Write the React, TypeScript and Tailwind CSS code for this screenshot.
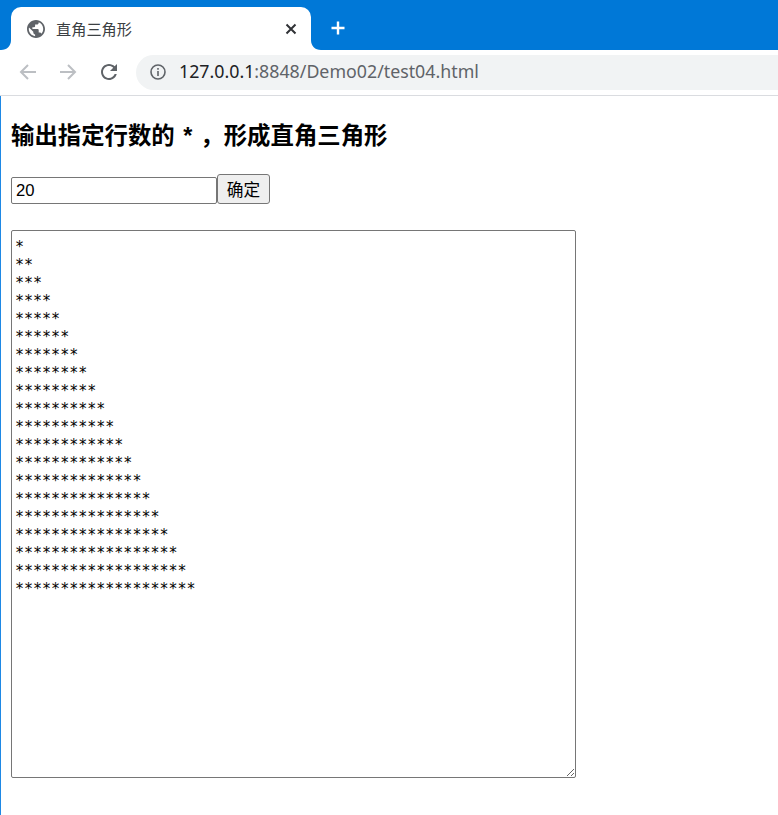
import React from 'react';

const rows = Array.from({ length: 20 }, (_, i) => '*'.repeat(i + 1)).join('\n');

const BrowserTab = () => (
  <div className="relative ml-[11px] flex h-[43px] w-[300px] items-center rounded-t-[10px] bg-white pl-[16px] pr-[14px]">
    {/* flares at the foot of the tab */}
    <svg className="absolute bottom-0 left-[-10px]" width="10" height="10" viewBox="0 0 10 10">
      <path d="M10 0V10H0C6 10 10 6 10 0Z" fill="#fff" />
    </svg>
    <svg className="absolute bottom-0 right-[-10px]" width="10" height="10" viewBox="0 0 10 10">
      <path d="M0 0V10H10C4 10 0 6 0 0Z" fill="#fff" />
    </svg>
    <svg width="18" height="18" viewBox="2 2 20 20" fill="#5f6368">
      <path d="M12 2C6.48 2 2 6.48 2 12s4.48 10 10 10 10-4.48 10-10S17.52 2 12 2zm-1 17.93c-3.95-.49-7-3.85-7-7.93 0-.62.08-1.21.21-1.79L9 15v1c0 1.1.9 2 2 2v1.93zm6.9-2.54c-.26-.81-1-1.39-1.9-1.39h-1v-3c0-.55-.45-1-1-1H8v-2h2c.55 0 1-.45 1-1V7h2c1.1 0 2-.9 2-2v-.41c2.93 1.19 5 4.06 5 7.41 0 2.08-.8 3.97-2.1 5.39z" />
    </svg>
    <span className="ml-[11px] flex-1 font-['Noto_Sans_CJK_SC',sans-serif] text-[15.2px] text-[#3c4043]">直角三角形</span>
    <svg width="12" height="12" viewBox="0 0 12 12" stroke="#303236" strokeWidth="2" fill="none">
      <path d="M1.5 1.5L10.5 10.5M10.5 1.5L1.5 10.5" />
    </svg>
  </div>
);

const Toolbar = () => (
  <div className="flex h-[46px] items-center border-b border-[#dadce0] bg-white pb-[1px]">
    <div className="ml-[18px] flex items-center">
      <svg width="20" height="20" viewBox="0 0 20 20" stroke="#bcbfc3" strokeWidth="2" fill="none">
        <path d="M18 10H3M10 3L3 10L10 17" />
      </svg>
      <svg className="ml-[20px]" width="20" height="20" viewBox="0 0 20 20" stroke="#bcbfc3" strokeWidth="2" fill="none">
        <path d="M2 10H17M10 3L17 10L10 17" />
      </svg>
      <svg className="ml-[19px]" width="24" height="24" viewBox="0 0 24 24" fill="#5f6368">
        <path d="M17.65 6.35C16.2 4.9 14.21 4 12 4c-4.42 0-7.99 3.58-7.99 8s3.57 8 7.99 8c3.73 0 6.84-2.55 7.73-6h-2.08c-.82 2.33-3.04 4-5.65 4-3.31 0-6-2.69-6-6s2.69-6 6-6c1.66 0 3.14.69 4.22 1.78L13 11h7V4l-2.35 2.35z" />
      </svg>
    </div>
    <div className="ml-[15px] flex h-[35px] flex-1 items-center rounded-l-full bg-[#f1f3f4] pl-[14px]">
      <svg width="16" height="16" viewBox="0 0 16 16" fill="none" stroke="#5f6368" strokeWidth="1.6">
        <circle cx="8" cy="8" r="7" />
        <path d="M8 7V12M8 4V5.8" />
      </svg>
      <span className="ml-[13px] font-['Noto_Sans',sans-serif] text-[17.8px] leading-none text-[#5f6368]">
        <span className="text-[#202124]">127.0.0.1</span>:8848/Demo02/test04.html
      </span>
    </div>
  </div>
);

export default function App() {
  return (
    <div className="h-[815px] overflow-hidden bg-white">
      <div className="flex h-[50px] items-end bg-[#0078d7]">
        <BrowserTab />
        <svg className="mb-[14px] ml-[19px]" width="16" height="16" viewBox="0 0 16 16" stroke="#fff" strokeWidth="2.4" fill="none">
          <path d="M8 1.5V14.5M1.5 8H14.5" />
        </svg>
      </div>
      <Toolbar />
      <div className="h-[719px] border-l border-[#1e88e5] pl-[10px] pt-[26px] font-['Liberation_Sans','Noto_Sans_CJK_SC',sans-serif] text-black">
        <h3 className="h-[28px] text-[23.4px] font-bold leading-[28px]">
          输出指定行数的 <span className="ml-[2px] mr-[1px]">*</span>
          <span className="ml-[7px]">，</span>形成直角三角形
        </h3>
        <div className="mt-[24px] flex items-end">
          <input
            readOnly
            value="20"
            className="h-[27px] w-[206px] rounded-[2px] border border-[#767676] px-[4px] text-[16.67px] outline-none"
          />
          <button className="h-[30px] w-[53px] rounded-[3px] border border-[#767676] bg-[#efefef] font-['Noto_Sans_CJK_SC',sans-serif] text-[16.67px] leading-none">
            确定
          </button>
        </div>
        <textarea
          readOnly
          defaultValue={rows}
          className="mt-[26px] block h-[548px] w-[565px] rounded-[2px] border border-[#767676] px-[3px] py-[7px] font-['DejaVu_Sans_Mono',monospace] text-[15px] leading-[18px] outline-none"
        />
      </div>
    </div>
  );
}
